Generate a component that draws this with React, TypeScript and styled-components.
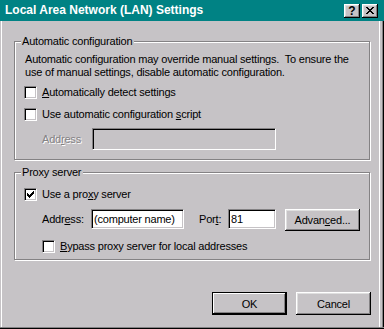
import { createGlobalStyle, styled } from "styled-components";

const color = {
  face: "#c6c3c6",
  shadow: "#848284",
  dark: "#000000",
  light: "#ffffff",
  softLight: "#dfdfdf",
  title: "#008284",
};

const GlobalStyle = createGlobalStyle`
  html, body {
    margin: 0;
    padding: 0;
    background: ${color.face};
  }
  body {
    font-family: "Liberation Sans", Arial, sans-serif;
    font-size: 11px;
    letter-spacing: -0.2px;
    color: #000;
  }
  * {
    box-sizing: border-box;
  }
`;

const Window = styled.div`
  width: 384px;
  height: 329px;
  display: flex;
  flex-direction: column;
  background: ${color.face};
`;

const TitleBar = styled.div`
  flex: none;
  height: 21px;
  display: flex;
  align-items: center;
  gap: 2px;
  padding: 0 6px 0 5px;
  background: ${color.title};
`;

const Caption = styled.div`
  flex: 1;
  color: #fff;
  font-weight: bold;
  font-size: 12px;
  letter-spacing: 0;
  line-height: 21px;
  white-space: nowrap;
`;

const CaptionButton = styled.div`
  width: 16px;
  height: 14px;
  display: flex;
  align-items: center;
  justify-content: center;
  background: ${color.face};
  box-shadow: inset -1px -1px 0 ${color.dark}, inset 1px 1px 0 ${color.light},
    inset -2px -2px 0 ${color.shadow}, inset 2px 2px 0 ${color.softLight};
  font-weight: bold;
  font-size: 12px;
  letter-spacing: 0;
  line-height: 14px;
`;

const Body = styled.div`
  flex: 1;
  display: flex;
  flex-direction: column;
  padding: 14px 13px 0 14px;
  box-shadow: inset 0 -1px 0 ${color.dark}, inset 0 -2px 0 ${color.shadow},
    inset 1px 0 0 ${color.face}, inset 2px 0 0 ${color.light},
    inset -1px 0 0 ${color.dark}, inset -2px 0 0 ${color.shadow},
    inset -4px 0 0 ${color.face}, inset -5px 0 0 ${color.light};
`;

const Group = styled.fieldset<{ $top?: number; $bottom: number }>`
  margin: ${(p) => p.$top ?? 0}px 0 0 0;
  padding: 0 0 ${(p) => p.$bottom}px 9px;
  min-width: 0;
  width: 356px;
  border: 1px solid ${color.shadow};
  box-shadow: 1px 1px 0 ${color.light}, inset 1px 1px 0 ${color.light};
`;

const Legend = styled.legend`
  padding: 0 2px 0 1px;
  margin-left: -3px;
  line-height: 13px;
  background: ${color.face};
`;

const Description = styled.p`
  margin: 5px 0 0 1px;
  line-height: 13px;
  white-space: nowrap;
`;

const Row = styled.div<{ $top: number; $indent?: number }>`
  display: flex;
  align-items: flex-start;
  margin-top: ${(p) => p.$top}px;
  padding-left: ${(p) => p.$indent ?? 0}px;
`;

const CheckRow = styled(Row)`
  align-items: center;
  gap: 5px;
  line-height: 13px;
`;

const Box = styled.span`
  flex: none;
  width: 13px;
  height: 13px;
  display: flex;
  align-items: center;
  justify-content: center;
  background: #fff;
  border: 1px solid;
  border-color: ${color.shadow} ${color.light} ${color.light} ${color.shadow};
  box-shadow: inset 1px 1px 0 ${color.dark}, inset -1px -1px 0 ${color.face};
`;

const FieldLabel = styled.span<{ $width: number; $gap?: number; $disabled?: boolean }>`
  flex: none;
  width: ${(p) => p.$width}px;
  margin-left: ${(p) => p.$gap ?? 0}px;
  line-height: ${(p) => (p.$disabled ? 22 : 20)}px;
  color: ${(p) => (p.$disabled ? color.shadow : "#000")};
  text-shadow: ${(p) => (p.$disabled ? `1px 1px 0 ${color.light}` : "none")};
`;

const TextField = styled.input<{ $width: number; $height: number; $disabled?: boolean }>`
  flex: none;
  width: ${(p) => p.$width}px;
  height: ${(p) => p.$height}px;
  margin: 0;
  padding: 0 2px;
  font: inherit;
  letter-spacing: inherit;
  color: #000;
  outline: none;
  background: ${(p) => (p.$disabled ? color.face : "#fff")};
  border: 1px solid;
  border-color: ${color.shadow} ${color.light} ${color.light} ${color.shadow};
  box-shadow: inset 1px 1px 0 ${color.dark}, inset -1px -1px 0 ${color.face};
`;

const Button = styled.button<{ $default?: boolean; $height?: number; $gap?: number }>`
  flex: none;
  width: 75px;
  height: ${(p) => p.$height ?? 23}px;
  margin: 0 0 0 ${(p) => p.$gap ?? 0}px;
  padding: 0;
  font: inherit;
  letter-spacing: inherit;
  color: #000;
  background: ${color.face};
  border: ${(p) => (p.$default ? `1px solid ${color.dark}` : "none")};
  box-shadow: ${(p) =>
    p.$default
      ? `inset -1px -1px 0 ${color.dark}, inset 1px 1px 0 ${color.light}, inset -2px -2px 0 ${color.shadow}`
      : `inset -1px -1px 0 ${color.dark}, inset 1px 1px 0 ${color.light}, inset -2px -2px 0 ${color.shadow}, inset 2px 2px 0 ${color.softLight}`};
`;

const ButtonBar = styled.div`
  display: flex;
  justify-content: flex-end;
  gap: 9px;
  margin-top: 32px;
`;

const CheckMark = () => (
  <svg width="7" height="7" viewBox="0 0 7 7" shapeRendering="crispEdges">
    <rect x="6" y="0" width="1" height="3" />
    <rect x="5" y="1" width="1" height="3" />
    <rect x="4" y="2" width="1" height="3" />
    <rect x="3" y="3" width="1" height="3" />
    <rect x="2" y="4" width="1" height="3" />
    <rect x="1" y="3" width="1" height="3" />
    <rect x="0" y="2" width="1" height="3" />
  </svg>
);

const CloseGlyph = () => (
  <svg width="8" height="7" viewBox="0 0 8 7" shapeRendering="crispEdges">
    <rect x="0" y="0" width="2" height="1" />
    <rect x="6" y="0" width="2" height="1" />
    <rect x="1" y="1" width="2" height="1" />
    <rect x="5" y="1" width="2" height="1" />
    <rect x="2" y="2" width="4" height="1" />
    <rect x="3" y="3" width="2" height="1" />
    <rect x="2" y="4" width="4" height="1" />
    <rect x="1" y="5" width="2" height="1" />
    <rect x="5" y="5" width="2" height="1" />
    <rect x="0" y="6" width="2" height="1" />
    <rect x="6" y="6" width="2" height="1" />
  </svg>
);

const Checkbox = ({ checked, children, top, indent }: { checked?: boolean; children: React.ReactNode; top: number; indent?: number }) => (
  <CheckRow $top={top} $indent={indent}>
    <Box>{checked && <CheckMark />}</Box>
    <span>{children}</span>
  </CheckRow>
);

const App = () => {
  return (
    <Window>
      <GlobalStyle />
      <TitleBar>
        <Caption>Local Area Network (LAN) Settings</Caption>
        <CaptionButton>?</CaptionButton>
        <CaptionButton>
          <CloseGlyph />
        </CaptionButton>
      </TitleBar>
      <Body>
        <Group $bottom={9}>
          <Legend>Automatic configuration</Legend>
          <Description>
            Automatic configuration may override manual settings.{"\u00a0 "}To ensure the
            <br />
            use of manual settings, disable automatic configuration.
          </Description>
          <Checkbox top={7}>
            <u>A</u>utomatically detect settings
          </Checkbox>
          <Checkbox top={9}>
            Use automatic configuration <u>s</u>cript
          </Checkbox>
          <Row $top={7} $indent={18}>
            <FieldLabel $width={50} $disabled>
              Add<u>r</u>ess
            </FieldLabel>
            <TextField $width={184} $height={22} $disabled readOnly disabled />
          </Row>
        </Group>

        <Group $top={6} $bottom={6}>
          <Legend>Proxy server</Legend>
          <Checkbox top={9} checked>
            Use a pro<u>x</u>y server
          </Checkbox>
          <Row $top={8} $indent={18}>
            <FieldLabel $width={49}>
              Addr<u>e</u>ss:
            </FieldLabel>
            <TextField $width={93} $height={20} defaultValue="(computer name)" readOnly />
            <FieldLabel $width={29} $gap={15}>
              Por<u>t</u>:
            </FieldLabel>
            <TextField $width={48} $height={20} defaultValue="81" readOnly />
            <Button $height={22} $gap={9}>
              Advan<u>c</u>ed...
            </Button>
          </Row>
          <Checkbox top={9} indent={18}>
            <u>B</u>ypass proxy server for local addresses
          </Checkbox>
        </Group>

        <ButtonBar>
          <Button $default>OK</Button>
          <Button>Cancel</Button>
        </ButtonBar>
      </Body>
    </Window>
  );
};

export default App;
